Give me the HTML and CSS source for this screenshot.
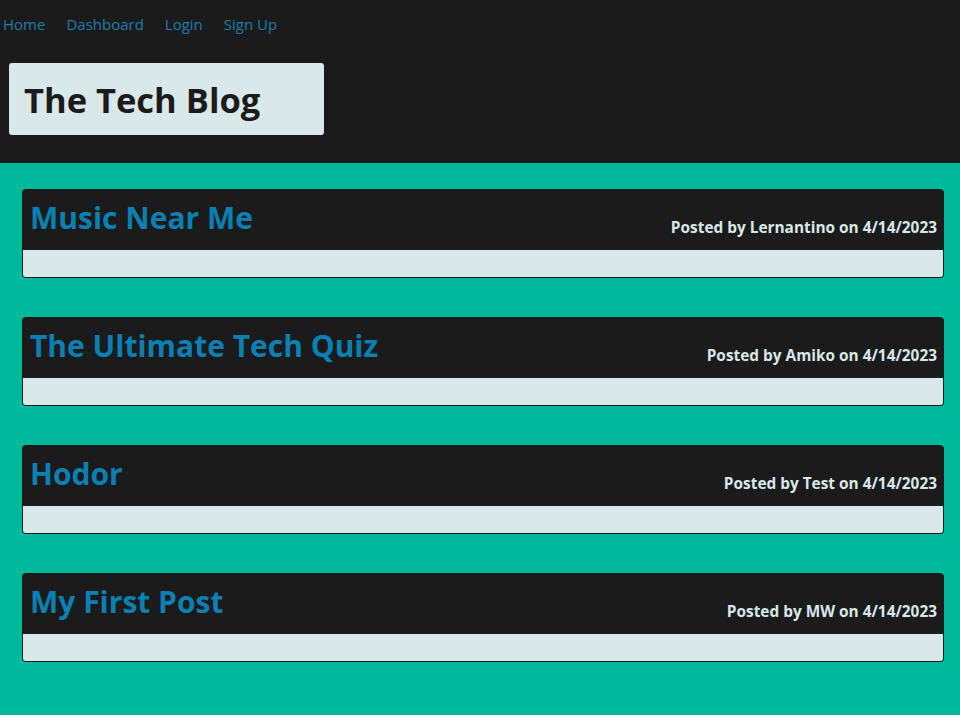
FILE: index.html
```html
<!DOCTYPE html>
<html>
<head>
<meta charset="utf-8">
<link rel="stylesheet" href="styles.css">
</head>
<body>
<header class="site-header">
  <nav class="nav">
    <a href="#">Home</a>
    <a href="#">Dashboard</a>
    <a href="#">Login</a>
    <a href="#">Sign Up</a>
  </nav>
  <div class="brand"><h1>The Tech Blog</h1></div>
</header>
<main class="posts">
  <article class="post">
    <div class="post-head"><h2>Music Near Me</h2><span class="meta">Posted by Lernantino on 4/14/2023</span></div>
    <div class="post-body"></div>
  </article>
  <article class="post">
    <div class="post-head"><h2>The Ultimate Tech Quiz</h2><span class="meta">Posted by Amiko on 4/14/2023</span></div>
    <div class="post-body"></div>
  </article>
  <article class="post">
    <div class="post-head"><h2>Hodor</h2><span class="meta">Posted by Test on 4/14/2023</span></div>
    <div class="post-body"></div>
  </article>
  <article class="post">
    <div class="post-head"><h2>My First Post</h2><span class="meta">Posted by MW on 4/14/2023</span></div>
    <div class="post-body"></div>
  </article>
</main>
</body>
</html>
```
FILE: styles.css
```css
html, body {
  margin: 0;
  padding: 0;
}
body {
  font-family: "Open Sans", "Noto Sans", sans-serif;
  background: #00b89c;
  min-height: 715px;
}
.site-header {
  background: #1b1b1b;
  height: 163px;
  box-sizing: border-box;
  padding-top: 11px;
}
.nav {
  display: flex;
  gap: 21px;
  padding-left: 3px;
  height: 26px;
  align-items: center;
}
.nav a {
  color: #1a7fb0;
  text-decoration: none;
  font-size: 15px;
}
.brand {
  margin: 26px 0 0 9px;
  width: 315px;
  height: 72px;
  background: #d9e8e8;
  border-radius: 3px;
  display: flex;
  align-items: center;
  padding-left: 15px;
  box-sizing: border-box;
}
.brand h1 {
  margin: 0;
  font-size: 34.5px;
  font-weight: 700;
  color: #1b1b1b;
}
.posts {
  padding: 26px 16px 0 22px;
  display: flex;
  flex-direction: column;
  gap: 39px;
}
.post {
  border-radius: 4px;
  overflow: hidden;
  border: 1px solid #1b1b1b;
  border-top: none;
}
.post-head {
  background: #1b1b1b;
  height: 61px;
  display: flex;
  justify-content: space-between;
  align-items: flex-end;
  padding: 0 6px 0 7px;
  box-sizing: border-box;
}
.post-head h2 {
  margin: 0 0 4px;
  align-self: center;
  font-size: 30px;
  font-weight: 700;
  color: #0a80b4;
}
.meta {
  color: #d9e8e8;
  font-weight: 700;
  font-size: 15.4px;
  padding-bottom: 12px;
}
.post-body {
  background: #d9e8e8;
  height: 27px;
}
```
